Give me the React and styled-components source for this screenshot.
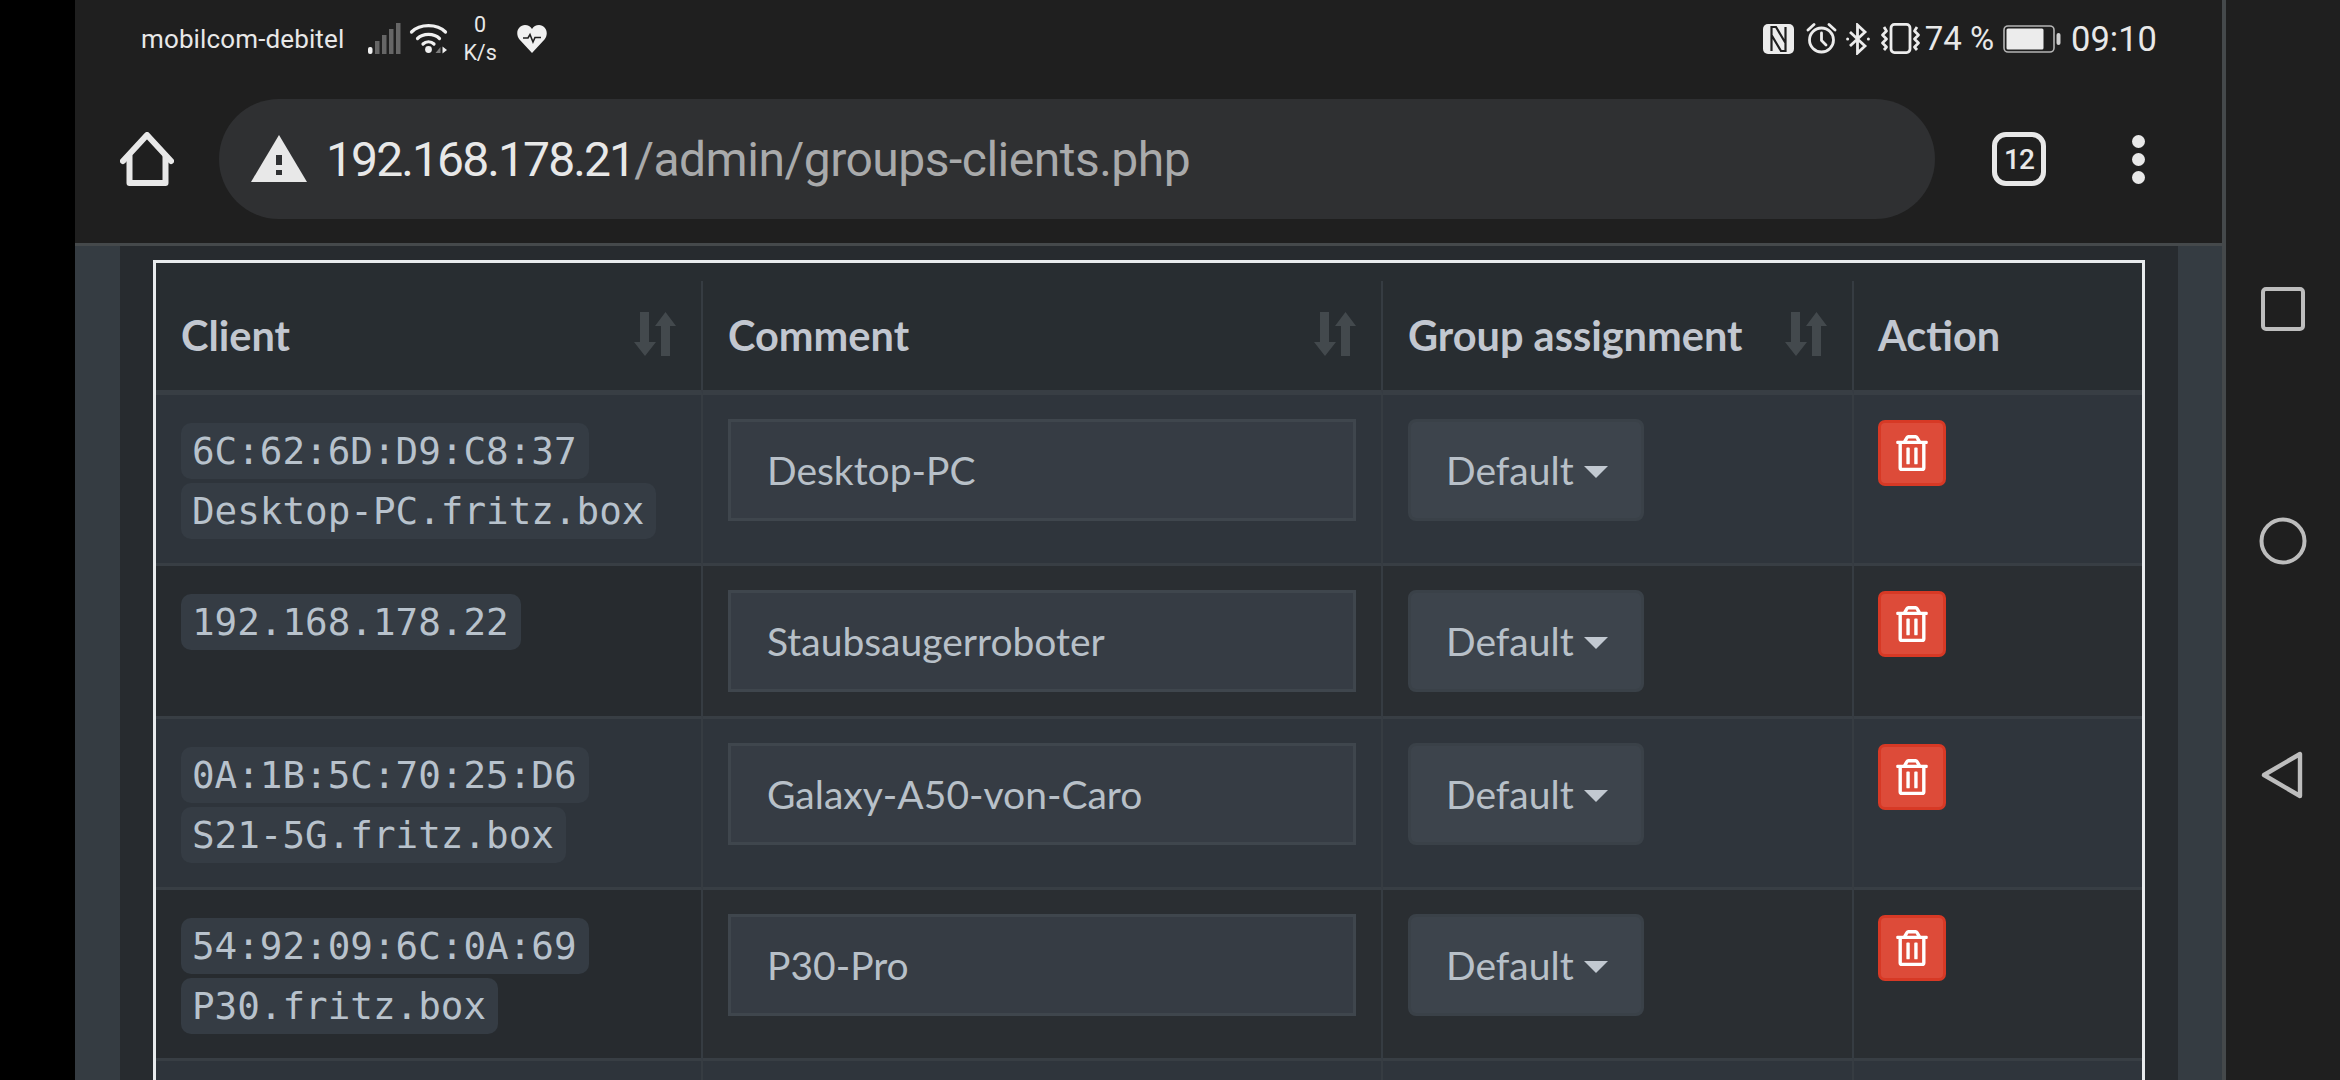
import React from "react";
import styled, { createGlobalStyle } from "styled-components";
import { FaRegTrashAlt } from "react-icons/fa";

const GlobalStyle = createGlobalStyle`
  html, body {
    margin: 0;
    padding: 0;
    background: #000;
    overflow: hidden;
  }
  * { box-sizing: border-box; }
`;

const Phone = styled.div`
  display: flex;
  width: 2340px;
  height: 1080px;
  overflow: hidden;
  background: #000;
  padding-left: 75px;
`;

const Main = styled.div`
  display: flex;
  flex-direction: column;
  width: 2151px;
  height: 1080px;
  border-right: 4px solid #45494b;
`;

const Chrome = styled.header`
  background: #1f1f1f;
  border-bottom: 3px solid #45494b;
  height: 246px;
  flex: none;
  color: #e8e8e8;
  font-family: Roboto, "Liberation Sans", sans-serif;
`;

const StatusBar = styled.div`
  display: flex;
  align-items: center;
  justify-content: space-between;
  height: 77px;
  padding: 0 65px 0 66px;
`;

const StatusGroup = styled.div`
  display: flex;
  align-items: center;
`;

const Carrier = styled.span`
  font-size: 26px;
  font-weight: 400;
  letter-spacing: 0.13px;
  margin-right: 24px;
`;

const Speed = styled.span`
  display: flex;
  flex-direction: column;
  align-items: center;
  font-size: 21.5px;
  line-height: 28px;
  margin: 0 20px 0 15px;
`;

const Percent = styled.span`
  font-size: 33px;
  font-weight: 400;
  margin: 0 9px 0 4px;
`;

const Clock = styled.span`
  font-size: 34.5px;
  font-weight: 400;
  margin-left: 10px;
`;

const Toolbar = styled.div`
  display: flex;
  align-items: center;
  height: 120px;
  margin-top: 22px;
  padding: 0 76px 0 45px;
`;

const Omnibox = styled.div`
  display: flex;
  align-items: center;
  width: 1716px;
  height: 120px;
  margin: 0 57px 0 45px;
  padding-left: 32px;
  border-radius: 60px;
  background: #2f3032;
  font-size: 48px;
`;

const Url = styled.span`
  margin-left: 19px;
  white-space: nowrap;
  letter-spacing: -1.9px;
`;

const UrlPath = styled.span`
  color: #a9aaab;
  letter-spacing: -0.5px;
`;

const TabCount = styled.div`
  display: flex;
  align-items: center;
  justify-content: center;
  width: 54px;
  height: 54px;
  margin-right: 86px;
  border: 5px solid #e8e8e8;
  border-radius: 14px;
  font-size: 28px;
  font-weight: 500;
  letter-spacing: -1px;
`;

const MenuDots = styled.div`
  display: flex;
  flex-direction: column;
  gap: 5px;
`;

const Dot = styled.span`
  width: 13px;
  height: 13px;
  border-radius: 50%;
  background: #e8e8e8;
`;

const Content = styled.div`
  display: flex;
  flex: 1;
  min-height: 0;
  background: #353c42;
  padding: 0 44px 0 45px;
`;

const Panel = styled.main`
  flex: 1;
  min-width: 0;
  overflow: hidden;
  background: #272b2f;
  padding: 14px 33px 0 33px;
`;

const TableBox = styled.div`
  border: solid #e8ebed;
  border-width: 3px 3px 0 3px;
  background: #282d31;
  padding-top: 18px;
`;

const Table = styled.table`
  table-layout: fixed;
  width: 1986px;
  border-collapse: separate;
  border-spacing: 0;
  font-family: Lato, "Noto Sans", sans-serif;
  color: #b8c0c8;
`;

const HeadCell = styled.th`
  height: 114px;
  padding: 0 25px;
  border-bottom: 5px solid #383e44;
  border-right: ${(p) => (p.$last ? "0" : "2px solid #363c42")};
  text-align: left;
  font-size: 41.5px;
  font-weight: 700;
  color: #c2c7d0;
`;

const HeadInner = styled.div`
  display: flex;
  align-items: center;
  justify-content: space-between;
  padding-bottom: 2px;
`;

const ActionLabel = styled.div`
  padding-bottom: 2px;
  margin-left: -1px;
`;

const Row = styled.tr`
  background: ${(p) => (p.$odd ? "#2f353c" : "#2a2e32")};
`;

const Cell = styled.td`
  vertical-align: top;
  padding: 24px 24px 24px ${(p) => (p.$last ? "24px" : "25px")};
  border-bottom: 3px solid #383e44;
  border-right: ${(p) => (p.$last ? "0" : "2px solid #363c42")};
  background: ${(p) => (p.$sorted ? (p.$odd ? "#2e343b" : "#272b2f") : "transparent")};
`;

const ClientLines = styled.div`
  display: flex;
  flex-direction: column;
  align-items: flex-start;
  gap: 4px;
  padding-top: 4px;
`;

const Code = styled.code`
  height: 56px;
  padding: 0 12px 0 11px;
  border-radius: 10px;
  background: #353c44;
  font-family: "DejaVu Sans Mono", "Liberation Mono", monospace;
  font-size: 37.6px;
  line-height: 56px;
  color: #b8c2cc;
  white-space: nowrap;
`;

const CommentInput = styled.div`
  display: flex;
  align-items: center;
  width: 628px;
  height: 102px;
  padding-left: 36px;
  border: 3px solid #3f464d;
  background: #363c44;
  font-size: 39px;
`;

const GroupSelect = styled.div`
  display: flex;
  align-items: center;
  width: 236px;
  height: 102px;
  padding-left: 35px;
  border: 3px solid #3a4148;
  border-radius: 8px;
  background: #3d444c;
  font-size: 39px;
`;

const Caret = styled.span`
  width: 0;
  height: 0;
  margin-left: 10px;
  margin-top: 3px;
  border-style: solid;
  border-width: 12px 12px 0 12px;
  border-color: #c2c9d1 transparent transparent transparent;
`;

const DeleteButton = styled.button`
  display: flex;
  align-items: center;
  justify-content: center;
  width: 68px;
  height: 66px;
  margin-top: 1px;
  padding: 0;
  border: 3px solid #d73925;
  border-radius: 7px;
  background: #dd4b39;
  color: #fff;
  font-size: 36px;
`;

const NavBar = styled.nav`
  display: flex;
  flex-direction: column;
  align-items: center;
  gap: 186px;
  width: 114px;
  height: 1080px;
  padding-top: 287px;
  background: #1f1f1f;
`;

const HomeIcon = () => (
  <svg width="54" height="54" viewBox="0 0 54 54" fill="none" stroke="#e8e8e8" strokeWidth="6" strokeLinejoin="round" strokeLinecap="round" style={{ flex: "none" }}>
    <path d="M3 29 L27 3 L51 29" />
    <path d="M9.5 24 V51 H45.5 V24" />
  </svg>
);

const WarningIcon = () => (
  <svg width="56" height="48" viewBox="0 0 56 48" style={{ flex: "none" }}>
    <path d="M28 0 L56 47 H0 Z" fill="#e8e8e8" />
    <rect x="25" y="20" width="6" height="10" fill="#2f3032" />
    <rect x="25" y="35" width="6" height="5" fill="#2f3032" />
  </svg>
);

const SignalIcon = () => (
  <svg width="33" height="31" viewBox="0 0 33 31" style={{ marginRight: 8 }}>
    <rect x="0" y="24" width="4.5" height="7" rx="2" fill="#f0f0f0" />
    <rect x="7" y="18" width="4.5" height="13" fill="#666" />
    <rect x="14" y="12" width="4.5" height="19" fill="#666" />
    <rect x="21" y="6" width="4.5" height="25" fill="#666" />
    <rect x="28" y="0" width="4.5" height="31" fill="#666" />
  </svg>
);

const WifiIcon = () => (
  <svg width="39" height="30" viewBox="0 0 39 30" fill="none" stroke="#f0f0f0" strokeWidth="3.2" strokeLinecap="round">
    <path d="M2.5 8 C11 -0.5 28 -0.5 36.5 8" />
    <path d="M8.5 14.5 C14 9 25 9 30.5 14.5" />
    <path d="M14 20 C17 17 22 17 25 20" />
    <circle cx="19.5" cy="25.5" r="3.4" fill="#f0f0f0" stroke="none" />
    <path d="M26.5 29 L31.5 23 V29 Z" fill="#7c7c7c" stroke="none" />
    <path d="M33.5 22.5 L38 26 L33.5 29.5 Z" fill="#f0f0f0" stroke="none" />
  </svg>
);

const HeartIcon = () => (
  <svg width="30" height="28" viewBox="0 0 30 28">
    <path d="M15 28 L2.5 14.5 C-2.5 8 1.5 0 8 0 C11 0 13.5 1.5 15 4 C16.5 1.5 19 0 22 0 C28.5 0 32.5 8 27.5 14.5 Z" fill="#f0f0f0" />
    <path d="M6 13 H11 L13 9.5 L16 17 L18 12.5 H24" fill="none" stroke="#1f1f1f" strokeWidth="1.6" />
  </svg>
);

const NfcIcon = () => (
  <svg width="31" height="30" viewBox="0 0 31 30" style={{ marginRight: 12 }}>
    <rect width="31" height="30" rx="5" fill="#ececec" />
    <path d="M8.5 27 V3 H13 L22.5 19 M22.5 3 V27 H18 L8.5 11" fill="none" stroke="#1f1f1f" strokeWidth="2.2" />
  </svg>
);

const AlarmIcon = () => (
  <svg width="31" height="31" viewBox="0 0 31 31" fill="none" stroke="#ececec" strokeWidth="2.8" strokeLinecap="round" style={{ marginRight: 9 }}>
    <circle cx="15.5" cy="17" r="12" />
    <path d="M15.5 10 V17.5 L20 22" />
    <path d="M2 7 L8 1.5 M29 7 L23 1.5" />
  </svg>
);

const BluetoothIcon = () => (
  <svg width="24" height="32" viewBox="0 0 24 32" fill="none" stroke="#ececec" strokeWidth="2.8" style={{ marginRight: 10 }}>
    <path d="M4 9 L19 23 L11.5 30 V2 L19 9 L4 23" />
    <circle cx="1.6" cy="16" r="1.5" fill="#ececec" stroke="none" />
    <circle cx="22.4" cy="16" r="1.5" fill="#ececec" stroke="none" />
  </svg>
);

const VibrateIcon = () => (
  <svg width="41" height="31" viewBox="0 0 41 31" fill="none" stroke="#ececec" strokeWidth="2.8" strokeLinejoin="round">
    <rect x="11" y="1.4" width="19" height="28.2" rx="3.5" />
    <path d="M4 4 L6.5 8 L2.5 12 L6.5 16 L2.5 20 L6.5 24 L4 27" />
    <path d="M37 4 L34.5 8 L38.5 12 L34.5 16 L38.5 20 L34.5 24 L37 27" />
  </svg>
);

const BatteryIcon = () => (
  <svg width="58" height="28" viewBox="0 0 58 28">
    <rect x="1" y="1" width="50" height="26" rx="4" fill="none" stroke="#b5b5b5" strokeWidth="1.6" />
    <rect x="3.5" y="3.5" width="37" height="21" rx="1.5" fill="#ececec" />
    <rect x="53.5" y="8" width="4" height="12" rx="2" fill="#d0d0d0" />
  </svg>
);

const SortIcon = () => (
  <svg width="42" height="44" viewBox="0 0 42 44" fill="#43494d" style={{ flex: "none", marginBottom: 2 }}>
    <path d="M6 0 H15 V30 H22 L11 44 L0 30 H6 Z" />
    <path d="M27 44 H36 V14 H42 L31.5 0 L21 14 H27 Z" />
  </svg>
);

const SquareIcon = () => (
  <svg width="44" height="44" viewBox="0 0 44 44" fill="none" stroke="#bdbdbd" strokeWidth="4">
    <rect x="2" y="2" width="40" height="40" rx="3" />
  </svg>
);

const CircleIcon = () => (
  <svg width="48" height="48" viewBox="0 0 48 48" fill="none" stroke="#bdbdbd" strokeWidth="4">
    <circle cx="24" cy="24" r="21.5" />
  </svg>
);

const BackIcon = () => (
  <svg width="44" height="48" viewBox="0 0 44 48" fill="none" stroke="#bdbdbd" strokeWidth="4.4" strokeLinejoin="round">
    <path d="M39 3 V45 L3 24 Z" />
  </svg>
);

const clients = [
  { lines: ["6C:62:6D:D9:C8:37", "Desktop-PC.fritz.box"], comment: "Desktop-PC" },
  { lines: ["192.168.178.22"], comment: "Staubsaugerroboter" },
  { lines: ["0A:1B:5C:70:25:D6", "S21-5G.fritz.box"], comment: "Galaxy-A50-von-Caro" },
  { lines: ["54:92:09:6C:0A:69", "P30.fritz.box"], comment: "P30-Pro" },
];

export default function App() {
  return (
    <>
      <GlobalStyle />
      <Phone>
        <Main>
          <Chrome>
            <StatusBar>
              <StatusGroup>
                <Carrier>mobilcom-debitel</Carrier>
                <SignalIcon />
                <WifiIcon />
                <Speed>
                  <span>0</span>
                  <span>K/s</span>
                </Speed>
                <HeartIcon />
              </StatusGroup>
              <StatusGroup>
                <NfcIcon />
                <AlarmIcon />
                <BluetoothIcon />
                <VibrateIcon />
                <Percent>74 %</Percent>
                <BatteryIcon />
                <Clock>09:10</Clock>
              </StatusGroup>
            </StatusBar>
            <Toolbar>
              <HomeIcon />
              <Omnibox>
                <WarningIcon />
                <Url>
                  192.168.178.21<UrlPath>/admin/groups-clients.php</UrlPath>
                </Url>
              </Omnibox>
              <TabCount>12</TabCount>
              <MenuDots>
                <Dot />
                <Dot />
                <Dot />
              </MenuDots>
            </Toolbar>
          </Chrome>
          <Content>
            <Panel>
              <TableBox>
                <Table>
                  <colgroup>
                    <col width="547" />
                    <col width="680" />
                    <col width="471" />
                    <col width="288" />
                  </colgroup>
                  <thead>
                    <tr>
                      <HeadCell>
                        <HeadInner>
                          Client
                          <SortIcon />
                        </HeadInner>
                      </HeadCell>
                      <HeadCell>
                        <HeadInner>
                          Comment
                          <SortIcon />
                        </HeadInner>
                      </HeadCell>
                      <HeadCell>
                        <HeadInner>
                          Group assignment
                          <SortIcon />
                        </HeadInner>
                      </HeadCell>
                      <HeadCell $last>
                        <ActionLabel>Action</ActionLabel>
                      </HeadCell>
                    </tr>
                  </thead>
                  <tbody>
                    {clients.map((client, i) => (
                      <Row key={client.comment} $odd={i % 2 === 0}>
                        <Cell $sorted $odd={i % 2 === 0}>
                          <ClientLines>
                            {client.lines.map((line) => (
                              <Code key={line}>{line}</Code>
                            ))}
                          </ClientLines>
                        </Cell>
                        <Cell>
                          <CommentInput>{client.comment}</CommentInput>
                        </Cell>
                        <Cell>
                          <GroupSelect>
                            Default
                            <Caret />
                          </GroupSelect>
                        </Cell>
                        <Cell $last>
                          <DeleteButton>
                            <FaRegTrashAlt />
                          </DeleteButton>
                        </Cell>
                      </Row>
                    ))}
                    {/* next row starts just above the fold, nothing of it is readable */}
                    <Row $odd>
                      <Cell $sorted $odd />
                      <Cell />
                      <Cell />
                      <Cell $last />
                    </Row>
                  </tbody>
                </Table>
              </TableBox>
            </Panel>
          </Content>
        </Main>
        <NavBar>
          <SquareIcon />
          <CircleIcon />
          <BackIcon />
        </NavBar>
      </Phone>
    </>
  );
}
